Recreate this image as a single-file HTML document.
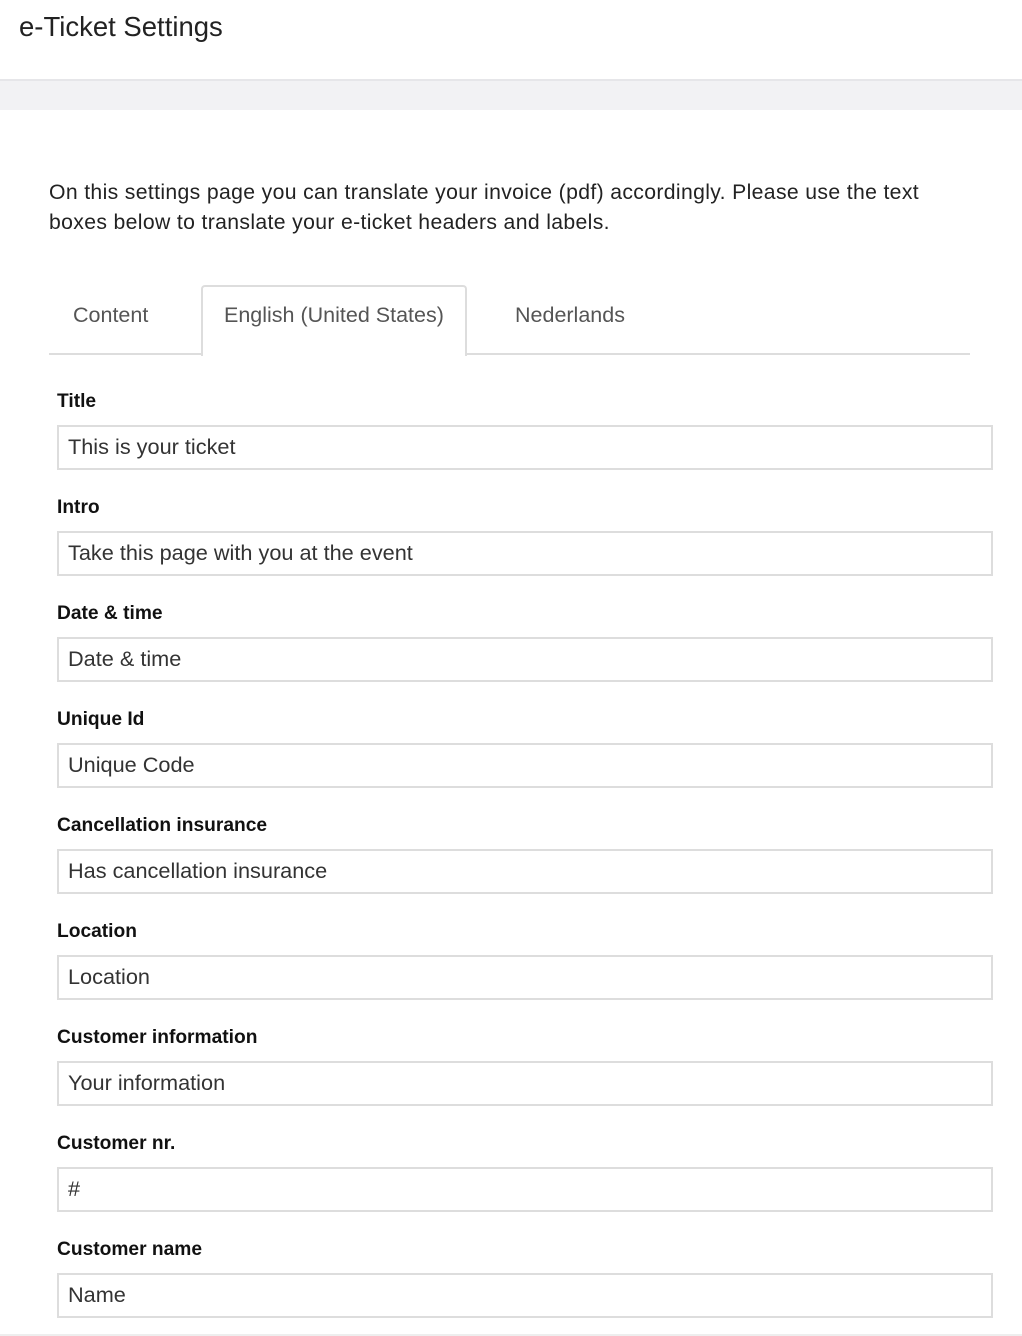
<!DOCTYPE html>
<html><head><style>
body{margin:0;width:1022px;height:1336px;overflow:hidden;background:#fff;font-family:"Liberation Sans",sans-serif;color:#222;position:relative}
.h{position:absolute;left:19px;top:11px;font-size:27.5px;color:#222}
.hb{position:absolute;left:0;top:79px;width:1022px;height:31px;background:#f2f2f4;border-top:2px solid #e6e6e9;box-sizing:border-box}
.p{position:absolute;left:49px;top:178px;font-size:21.2px;letter-spacing:0.35px;line-height:30px;width:960px;color:#222;white-space:nowrap}
.tl{position:absolute;left:49px;top:353px;width:921px;height:2px;background:#ddd}
.tab{position:absolute;top:303px;font-size:21.5px;color:#555}
.act{position:absolute;left:201px;top:285px;width:266px;height:71px;border:2px solid #ddd;border-bottom:none;border-radius:4px 4px 0 0;background:#fff;box-sizing:border-box}
.lb{position:absolute;left:57px;font-size:19.2px;font-weight:bold;color:#111}
.in{position:absolute;left:57px;width:936px;height:45px;border:2px solid #ddd;box-sizing:border-box;font-size:21.7px;color:#333;padding:7px 0 0 9px}
.bl{position:absolute;left:0;top:1334px;width:1022px;height:2px;background:#eee}
</style></head><body>
<div class="h">e-Ticket Settings</div>
<div class="hb"></div>
<div class="p">On this settings page you can translate your invoice (pdf) accordingly. Please use the text<br>boxes below to translate your e-ticket headers and labels.</div>
<div class="tl"></div>
<div class="act"></div>
<div class="tab" style="left:73px">Content</div>
<div class="tab" style="left:224px">English (United States)</div>
<div class="tab" style="left:515px">Nederlands</div>

<div class="lb" style="top:391px">Title</div><div class="in" style="top:425px">This is your ticket</div>
<div class="lb" style="top:497px">Intro</div><div class="in" style="top:531px">Take this page with you at the event</div>
<div class="lb" style="top:603px">Date &amp; time</div><div class="in" style="top:637px">Date &amp; time</div>
<div class="lb" style="top:709px">Unique Id</div><div class="in" style="top:743px">Unique Code</div>
<div class="lb" style="top:815px">Cancellation insurance</div><div class="in" style="top:849px">Has cancellation insurance</div>
<div class="lb" style="top:921px">Location</div><div class="in" style="top:955px">Location</div>
<div class="lb" style="top:1027px">Customer information</div><div class="in" style="top:1061px">Your information</div>
<div class="lb" style="top:1133px">Customer nr.</div><div class="in" style="top:1167px">#</div>
<div class="lb" style="top:1239px">Customer name</div><div class="in" style="top:1273px">Name</div>
<div class="bl"></div>
</body></html>
